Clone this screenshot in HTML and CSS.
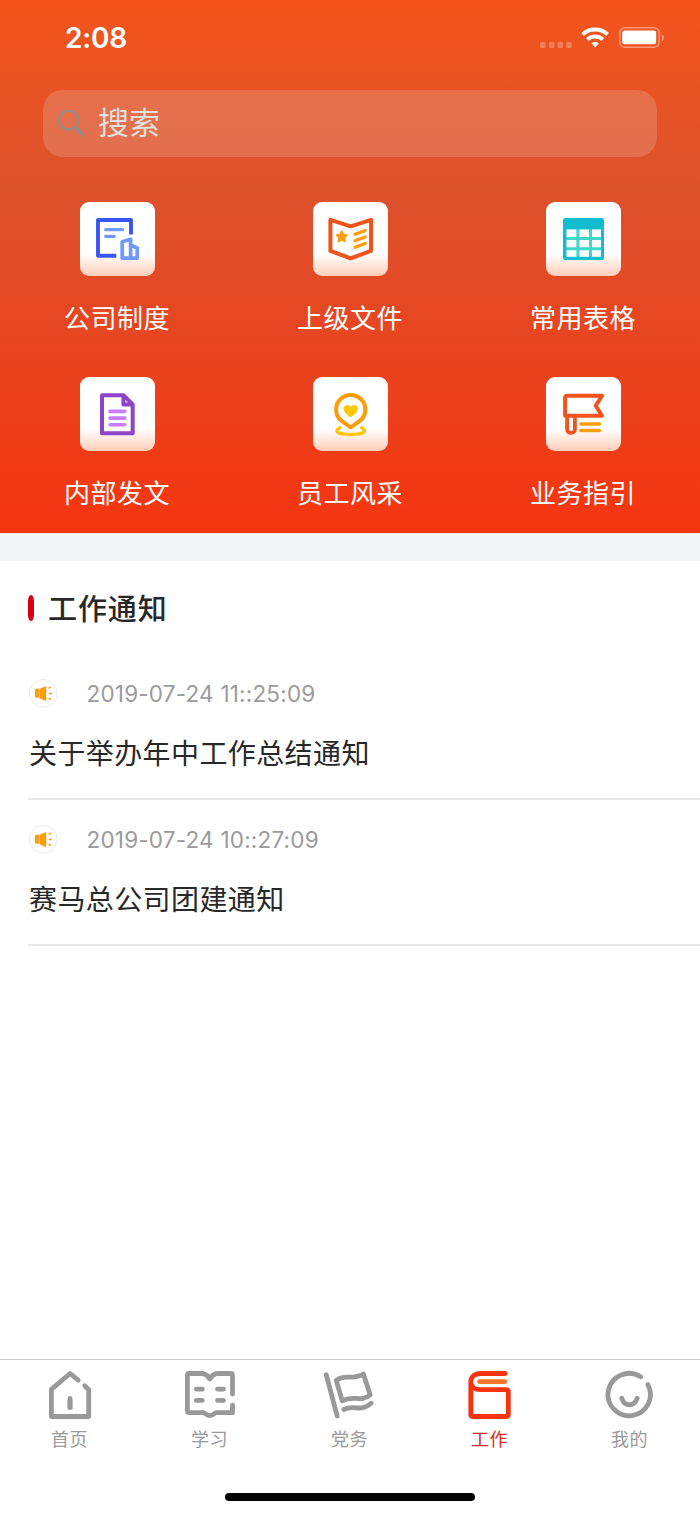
FILE: index.html
```html
<!DOCTYPE html>
<html lang="zh-CN">
<head>
    <meta charset="UTF-8">
    <meta name="viewport" content="width=device-width, initial-scale=1.0">
    <title>工作</title>
    <link rel="stylesheet" href="styles.css">
</head>
<body>
    <div class="header">
        <div class="status-bar">
            <span class="time">2:08</span>
            <svg class="status-icons" width="126" height="24" viewBox="0 0 126 24">
                <g fill="#fff" opacity="0.25">
                    <rect x="2" y="16" width="5.5" height="6" rx="1.5"/>
                    <rect x="11" y="16" width="5.5" height="6" rx="1.5"/>
                    <rect x="19.5" y="16" width="5.5" height="6" rx="1.5"/>
                    <rect x="28.2" y="16" width="5.5" height="6" rx="1.5"/>
                </g>
                <g fill="none" stroke="#fff" stroke-width="4">
                    <path d="M44.6 8.4a18.3 18.3 0 0 1 25 0"/>
                    <path d="M49.4 13.5a11.500 11.500 0 0 1 15.400 0"/>
                </g>
                <path d="M53.400 17.300a5.700 5.700 0 0 1 7.400 0l-3.700 4.300z" fill="#fff"/>
                <rect x="81.800" y="1.800" width="39.400" height="19.400" rx="5" fill="none" stroke="#fff" stroke-opacity="0.42" stroke-width="1.500"/>
                <rect x="84.200" y="4.500" width="34" height="13.700" rx="2.600" fill="#fff"/>
                <path d="M123.800 8.200q2.200.9 2.200 3.400t-2.200 3.600z" fill="#fff" opacity="0.45"/>
            </svg>
        </div>
        <div class="search">
            <svg width="28" height="28" viewBox="0 0 28 28" fill="none" stroke="#948c8b">
                <circle cx="10.400" cy="10.100" r="9.500" stroke-width="2.200"/>
                <path d="M17 17l8.500 8.500" stroke-width="3.200"/>
            </svg>
            <span>搜索</span>
        </div>
        <div class="menu">
            <div class="menu-item">
                <div class="tile">
                    <svg viewBox="0 0 75 75" fill="none">
                        <path d="M51 32.5V18H18v35.8h18.3" stroke="#3b54f0" stroke-width="3.9" stroke-linejoin="round"/>
                        <g stroke="#6f99ff" stroke-width="3.3" stroke-linecap="round" stroke-linejoin="round">
                            <path d="M25.7 27.7h16.8M25.7 34.3h8.6"/>
                            <path d="M42.2 56.1V39.8l8.4-2.5v18.8zM50.6 43l6.6 3v10.1h-6.6" stroke-width="3.7"/>
                        </g>
                    </svg>
                </div>
                <span>公司制度</span>
            </div>
            <div class="menu-item">
                <div class="tile">
                    <svg viewBox="0 0 75 75" fill="none" stroke-linecap="round" stroke-linejoin="round">
                        <path d="M17.4 17.8l20.3 6.5L58 17.8v31.1l-20.3 7.4-20.3-7.4z" stroke="#f1531d" stroke-width="4"/>
                        <path d="M28.7 29l1.7 3.4 3.6.6-2.6 2.7.6 3.8-3.3-1.7-3.3 1.7.6-3.8-2.6-2.7 3.6-.6z" fill="#ff9c0a" stroke="#ff9c0a" stroke-width="1.5"/>
                        <path d="M42 32.3l10.3-3.9M42 38.8l10.3-3.9M42 45.3l10.3-3.9" stroke="#ff9c0a" stroke-width="3.2"/>
                    </svg>
                </div>
                <span>上级文件</span>
            </div>
            <div class="menu-item">
                <div class="tile">
                    <svg viewBox="0 0 75 75">
                        <rect x="17" y="16" width="41" height="42" rx="2.6" fill="#13bccf"/>
                        <rect x="20.5" y="27.5" width="34.5" height="27.3" fill="#3fd6cc"/>
                        <path d="M20.5 27.5H30.4V35H20.5zM33.5 27.5H43V35H33.5zM46 27.5h9V35h-9zM20.5 38h9.9v7.2h-9.9zM33.5 38H43v7.2h-9.5zM46 38h9v7.2h-9zM20.5 48.2h9.9v6.6h-9.9zM33.5 48.2H43v6.6h-9.5zM46 48.2h9v6.6h-9z" fill="#fff"/>
                    </svg>
                </div>
                <span>常用表格</span>
            </div>
            <div class="menu-item">
                <div class="tile">
                    <svg viewBox="0 0 75 75" fill="none" stroke-linecap="round" stroke-linejoin="round">
                        <path d="M43.4 18.2H22v38h30.7V27.500zM43.4 18.200V27.500h9.300" stroke="#8f43c7" stroke-width="4"/>
                        <path d="M30 34.400h14.800M30 41.100h14.800M30 47.800h14.800" stroke="#c77dff" stroke-width="3.6"/>
                    </svg>
                </div>
                <span>内部发文</span>
            </div>
            <div class="menu-item">
                <div class="tile">
                    <svg viewBox="0 0 75 75" fill="none" stroke-linecap="round" stroke-linejoin="round">
                        <path d="M26.800 50.700c-8 5.200 2 6.600 10.900 6.600s18.900-1.400 10.900-6.600" stroke="#ffc400" stroke-width="3.200"/>
                        <path d="M37.700 50.300L28 43.400a14.600 14.600 0 1 1 19.400 0z" stroke="#ff9c0a" stroke-width="4"/>
                        <path d="M37.700 40.600c-3-2.600-7.100-5.600-7.100-8.800 0-4 5-4.900 7.100-2 2.100-2.900 7.100-2 7.100 2 0 3.200-4.100 6.200-7.100 8.800z" fill="#ffc800"/>
                    </svg>
                </div>
                <span>员工风采</span>
            </div>
            <div class="menu-item">
                <div class="tile">
                    <svg viewBox="0 0 75 75" fill="none" stroke-linejoin="round">
                        <path d="M21.100 40v12.500c0 4.600 7.800 4.600 7.800 0V40" stroke="#f1531d" stroke-width="3.800"/>
                        <path d="M56 18.700H21.500q-2.400 0-2.400 2.400v17.600H56l-6.300-10z" stroke="#f1531d" stroke-width="4"/>
                        <path d="M34.800 47h18.600M34.800 53.600h18.600" stroke="#ff9c0a" stroke-width="3.500" stroke-linecap="round"/>
                    </svg>
                </div>
                <span>业务指引</span>
            </div>
        </div>
    </div>

    <div class="notices">
        <h3><span>工作通知</span></h3>
        <div class="notice">
            <div class="notice-top">
                <svg width="29" height="29" viewBox="0 0 29 29">
                    <circle cx="14.300" cy="14.300" r="13.900" fill="#fff" stroke="#e9e9e9"/>
                    <path d="M7.200 9.800h3v9h-3q-1.200-.2-1.200-1.200v-6.600Q6 10 7.200 9.800zM10.700 9.800l5.300-2.400q1.200-.2 1.200.8v12.800q0 1-1.200.8l-5.300-2.500z" fill="#ff9c0a"/>
                    <path d="M19.600 9.400l2.300-1.300M19.800 14.400h3.100M19.600 19.200l2.300 1.400" stroke="#ff9c0a" stroke-width="1.500"/>
                </svg>
                <span>2019-07-24 11::25:09</span>
            </div>
            <p>关于举办年中工作总结通知</p>
        </div>
        <div class="notice">
            <div class="notice-top">
                <svg width="29" height="29" viewBox="0 0 29 29">
                    <circle cx="14.300" cy="14.300" r="13.900" fill="#fff" stroke="#e9e9e9"/>
                    <path d="M7.200 9.800h3v9h-3q-1.200-.2-1.200-1.200v-6.600Q6 10 7.200 9.800zM10.700 9.800l5.300-2.400q1.200-.2 1.200.8v12.800q0 1-1.200.8l-5.300-2.500z" fill="#ff9c0a"/>
                    <path d="M19.600 9.400l2.300-1.300M19.800 14.400h3.100M19.600 19.200l2.300 1.400" stroke="#ff9c0a" stroke-width="1.500"/>
                </svg>
                <span>2019-07-24 10::27:09</span>
            </div>
            <p>赛马总公司团建通知</p>
        </div>
    </div>

    <div class="tab-bar">
        <div class="tabs">
            <div class="tab">
                <svg viewBox="0 0 56 50">
                    <path d="M36.200 10.200L28 3.500 9.400 19.300v27.200h37.300V19.800l-4-4"/>
                    <path d="M28 28.500v9"/>
                    <path d="M28 30v9.500" stroke-linecap="butt"/>
                </svg>
                <span>首页</span>
            </div>
            <div class="tab">
                <svg viewBox="0 0 56 50">
                    <path d="M50.500 24V5.500q0-2-2-2H36c-4 0-6.500 2.500-8.200 5.500-1.700-3-4.200-5.500-8.200-5.500H7.400q-2 0-2 2v35.200q0 2 2 2h14c2 0 2.500 3 6.400 3s4.400-3 6.400-3h16.300v-7.500"/>
                    <path d="M14.300 19.200h6M35.500 19.200h6M14.300 30.400h6M35.500 30.400h6"/>
                </svg>
                <span>学习</span>
            </div>
            <div class="tab">
                <svg viewBox="0 0 56 50">
                    <path d="M4.200 4.700L15.200 46"/>
                    <path d="M14.200 10.400c9-7 15 .5 27.200-6.300l6.800 20.800c-10.200 8.100-16.200-.4-28 5.900z"/>
                    <path d="M21.800 39.500c10.500-5.300 16.700 3.200 27.400-6.200"/>
                </svg>
                <span>党务</span>
            </div>
            <div class="tab active">
                <svg viewBox="0 0 56 50">
                    <path d="M43.200 3.500H18.500c-6 0-9.700 3.500-9.700 8.500v32.500q0 2 2 2h33.500q2 0 2-2v-22.800q0-2-2-2H18.500c-6 0-9.700-3-9.700-7.700"/>
                    <path class="accent" d="M17.500 11.600h25.300"/>
                </svg>
                <span>工作</span>
            </div>
            <div class="tab">
                <svg viewBox="0 0 56 50">
                    <path d="M38.600 6.700A21.200 21.200 0 1 0 45.900 14.600"/>
                    <path d="M19.800 28.300c2.800 8.700 12.500 8.700 15.400 0"/>
                </svg>
                <span>我的</span>
            </div>
        </div>
        <div class="home-indicator"></div>
    </div>
</body>
</html>
```

FILE: styles.css
```css
body {
    font-family: Inter, 'Noto Sans CJK SC', sans-serif;
    display: flex;
    flex-direction: column;
    height: 1515px;
    margin: 0;
    background: #fff;
    color: #282828;
}
.header {
    box-sizing: border-box;
    height: 533px;
    background: linear-gradient(#f4541b 0, #dc522d 190px, #f53510 533px);
    color: #fff;
}
.status-bar {
    display: flex;
    justify-content: space-between;
    align-items: center;
    height: 76px;
    padding: 0 36px 0 65px;
    margin-bottom: 14px;
}
.time {
    font-size: 28px;
    font-weight: 600;
    letter-spacing: -0.2px;
}
.search {
    display: flex;
    align-items: center;
    gap: 12px;
    box-sizing: border-box;
    height: 67px;
    margin: 0 43px;
    padding-left: 15px;
    border-radius: 20px;
    background: rgba(228, 228, 228, 0.2);
    color: #e3e0de;
    font-size: 31px;
    line-height: 65px;
}
.search span {
    padding-bottom: 2px;
}
.menu {
    display: grid;
    grid-template-columns: repeat(3, 1fr);
    grid-auto-rows: 174.5px;
    padding: 45px 0 0 1px;
}
.menu-item {
    display: flex;
    flex-direction: column;
    align-items: center;
    font-size: 26px;
    letter-spacing: 0.5px;
    line-height: 40px;
}
.menu-item span {
    margin-right: 1px;
}
.tile {
    width: 75px;
    height: 74px;
    margin-bottom: 23px;
    border-radius: 9px;
    background: linear-gradient(#fff 70%, #ffceb8);
}
.tile svg {
    display: block;
}
.notices {
    flex: 1;
    border-top: 28px solid #f3f4f6;
    padding-left: 28px;
}
h3 {
    display: flex;
    align-items: center;
    gap: 14px;
    height: 94px;
    margin: 0 0 5px;
    font-size: 29px;
    font-weight: 500;
    letter-spacing: 0.9px;
}
h3 span {
    padding-bottom: 2px;
}
h3::before {
    content: '';
    width: 6px;
    height: 26px;
    border-radius: 3px / 6px;
    background: #d9000f;
}
.notice {
    box-sizing: border-box;
    height: 145.5px;
    padding-top: 24.5px;
    border-bottom: 2px solid #e8e8e8;
}
.notice:first-of-type {
    height: 140px;
    padding-top: 19px;
}
.notice-top {
    display: flex;
    align-items: center;
    gap: 28.5px;
    height: 29px;
    padding-left: 1px;
    color: #9b9b9b;
    font-size: 22.5px;
    letter-spacing: 0.2px;
}
.notice p {
    margin: 25px 0 0 1px;
    font-size: 28px;
    letter-spacing: 0.4px;
    line-height: 42px;
}
.tab-bar {
    display: flex;
    flex-direction: column;
    align-items: center;
    justify-content: space-between;
    box-sizing: border-box;
    height: 156px;
    padding: 10px 0 14px;
    border-top: 1px solid #ccc;
}
.tabs {
    display: flex;
    align-self: stretch;
}
.tab {
    display: flex;
    flex: 1;
    flex-direction: column;
    align-items: center;
    color: #999;
    font-size: 18px;
    letter-spacing: 0.5px;
    line-height: 34px;
}
.tab span {
    margin-right: 1px;
}
.tab svg {
    width: 56px;
    height: 50px;
    margin-bottom: 3px;
    fill: none;
    stroke: #999;
    stroke-width: 4.8;
    stroke-linecap: round;
    stroke-linejoin: round;
}
.tab.active {
    color: #dc2630;
}
.tab.active svg {
    stroke: #f8340e;
}
.tab.active .accent {
    stroke: #ff7527;
}
.home-indicator {
    width: 250px;
    height: 8px;
    border-radius: 4px;
    background: #000;
}
```
